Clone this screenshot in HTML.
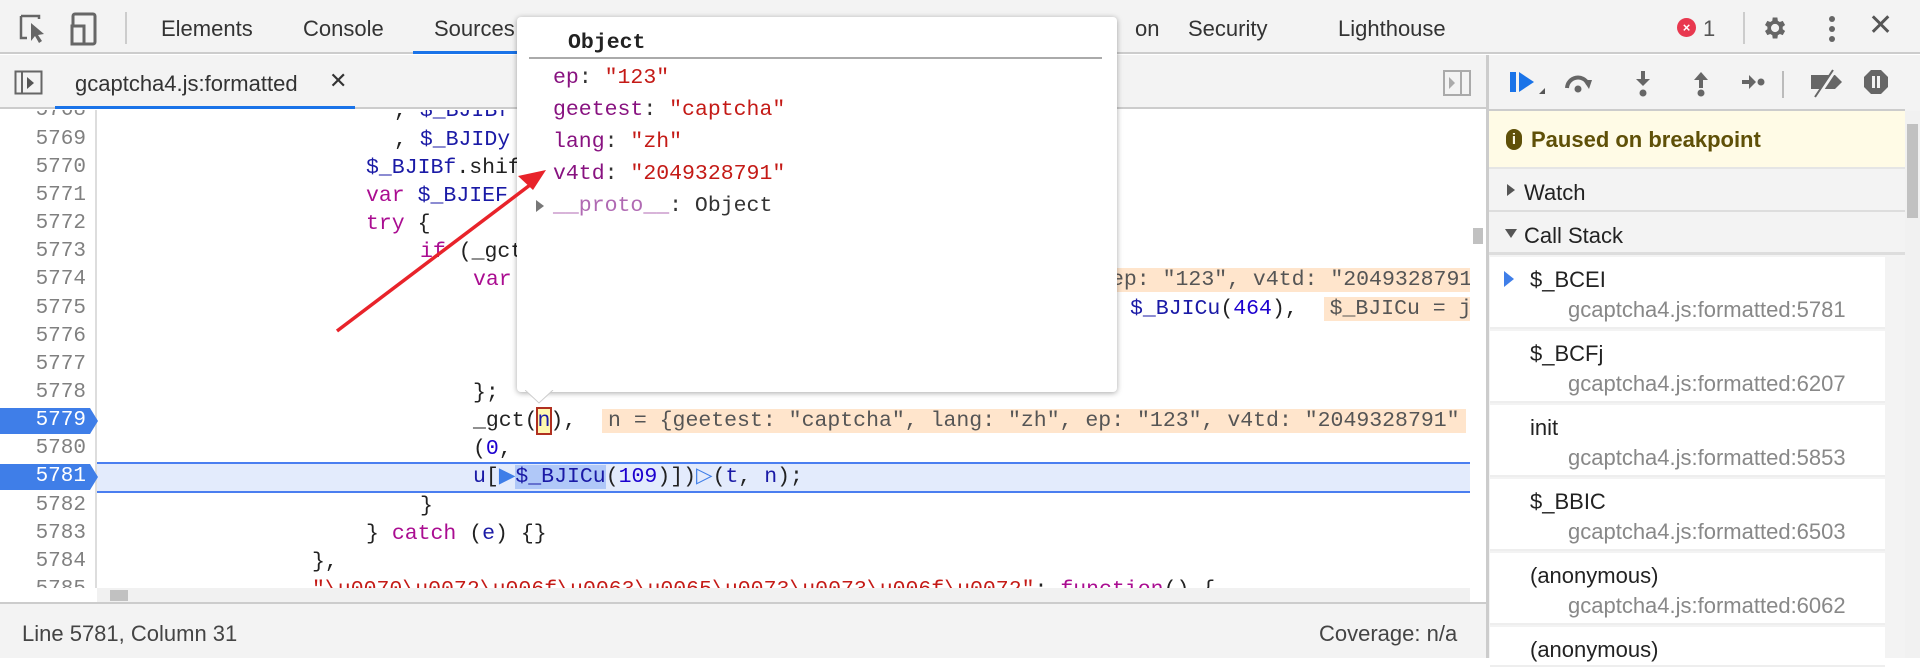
<!DOCTYPE html>
<html><head><meta charset="utf-8"><style>
*{margin:0;padding:0;box-sizing:border-box}
body{width:1920px;height:658px;overflow:hidden;background:#fff;font-family:"Liberation Sans",sans-serif;position:relative;color:#333}
.a{position:absolute}
.ui{font-size:22px;color:#333;white-space:nowrap}
.mono{font-family:"Liberation Mono",monospace;font-size:21.5px;white-space:pre}
.ln{position:absolute;left:0;width:86px;text-align:right;color:#808080;font-family:"Liberation Mono",monospace;font-size:21px;height:28px;line-height:28px}
.cl{position:absolute;height:28px;line-height:28px;font-family:"Liberation Mono",monospace;font-size:21.5px;white-space:pre;color:#222}
.v{color:#1a1aa6}.k{color:#aa0d91}.s{color:#c41a16}.n{color:#1c00cf}
.inl{background:#ffe5cc;color:#555;padding:0 6px}
.cs{position:absolute;left:1490px;width:395px;height:72px;background:#fff;border-bottom:2px solid #eee}
.cs .nm{position:absolute;left:40px;top:10px;font-size:22px;color:#222}
.cs .fl{position:absolute;left:78px;top:40px;font-size:22px;color:#888}
</style></head><body>
<!-- top bar -->
<div class="a" style="left:0;top:0;width:1920px;height:54px;background:#f3f3f3;border-bottom:2px solid #ccc"></div>
<svg class="a" style="left:18px;top:14px" width="40" height="30" viewBox="0 0 40 30"><path d="M3 2h18v3M3 2v22h6" fill="none" stroke="#666" stroke-width="2.5"/><path d="M13 9l0 18 4-5 4 7 3-2-4-6 6-1z" fill="#666"/></svg>
<svg class="a" style="left:70px;top:12px" width="30" height="34"><rect x="3" y="2" width="22" height="30" rx="2" fill="none" stroke="#666" stroke-width="3"/><rect x="2" y="14" width="12" height="18" fill="#f3f3f3" stroke="#666" stroke-width="3"/></svg>
<div class="a" style="left:125px;top:12px;width:2px;height:32px;background:#ccc"></div>
<div class="a ui" style="left:161px;top:16px">Elements</div>
<div class="a ui" style="left:303px;top:16px">Console</div>
<div class="a ui" style="left:434px;top:16px">Sources</div>
<div class="a" style="left:413px;top:51px;width:110px;height:3px;background:#1a73e8"></div>
<div class="a ui" style="left:1135px;top:16px">on</div>
<div class="a ui" style="left:1188px;top:16px">Security</div>
<div class="a ui" style="left:1338px;top:16px">Lighthouse</div>
<div class="a" style="left:1677px;top:18px;width:19px;height:19px;border-radius:50%;background:#e8384f;color:#fff;font-size:13px;text-align:center;line-height:19px;font-weight:bold">×</div>
<div class="a ui" style="left:1703px;top:16px;color:#555">1</div>
<div class="a" style="left:1743px;top:12px;width:2px;height:32px;background:#ccc"></div>
<svg class="a" style="left:1760px;top:14px" width="28" height="28" viewBox="0 0 24 24"><path fill="#666" d="M19.4 13a7.5 7.5 0 000-2l2.1-1.6-2-3.5-2.5 1a7 7 0 00-1.700-1L14.9 3h-4l-.4 2.9a7 7 0 00-1.7 1l-2.5-1-2 3.5L6.4 11a7.5 7.5 0 000 2l-2.1 1.6 2 3.5 2.5-1a7 7 0 001.7 1l.4 2.9h4l.4-2.9a7 7 0 001.7-1l2.5 1 2-3.5zM12.9 15.5a3.5 3.5 0 110-7 3.5 3.5 0 010 7z"/></svg>
<div class="a" style="left:1829px;top:16px;width:6px;height:6px;border-radius:50%;background:#666;box-shadow:0 10px 0 #666,0 20px 0 #666"></div>
<div class="a" style="left:1868px;top:8px;font-size:30px;color:#555">✕</div>

<!-- second toolbar -->
<div class="a" style="left:0;top:55px;width:1488px;height:54px;background:#f3f3f3;border-bottom:2px solid #ccc"></div>
<svg class="a" style="left:14px;top:70px" width="30" height="26"><rect x="1.5" y="1.5" width="26" height="22" fill="none" stroke="#666" stroke-width="2"/><line x1="8" y1="2" x2="8" y2="24" stroke="#666" stroke-width="2"/><path d="M13 7v12l7-6z" fill="#555"/></svg>
<div class="a ui" style="left:75px;top:71px">gcaptcha4.js:formatted</div>
<div class="a ui" style="left:329px;top:68px;font-size:22px">✕</div>
<div class="a" style="left:55px;top:106px;width:300px;height:3px;background:#1a73e8"></div>
<svg class="a" style="left:1443px;top:70px" width="28" height="26"><rect x="1" y="1" width="26" height="24" fill="none" stroke="#aaa" stroke-width="2"/><line x1="18" y1="1" x2="18" y2="25" stroke="#aaa" stroke-width="2"/><path d="M6 7v12l6-6z" fill="#aaa"/></svg>

<!-- code area -->
<div class="a" style="left:0;top:110px;width:1470px;height:478px;overflow:hidden">
 <div class="a" style="left:95px;top:0;width:2px;height:478px;background:#ddd"></div>
 <div class="a" style="left:97px;top:352px;width:1373px;height:31px;background:#e3ebfc;border-top:2px solid #4a7ef0;border-bottom:2px solid #4a7ef0"></div>
 <svg class="a" style="left:0;top:297px" width="100" height="28"><path d="M0 1h90l8 13-8 13H0z" fill="#3f7ee8"/></svg>
 <svg class="a" style="left:0;top:353px" width="100" height="28"><path d="M0 1h90l8 13-8 13H0z" fill="#3f7ee8"/></svg>
 <div class="ln" style="top:-13px">5768</div>
 <div class="ln" style="top:15.5px">5769</div>
 <div class="ln" style="top:43.7px">5770</div>
 <div class="ln" style="top:71.8px">5771</div>
 <div class="ln" style="top:100px">5772</div>
 <div class="ln" style="top:128.1px">5773</div>
 <div class="ln" style="top:156.3px">5774</div>
 <div class="ln" style="top:184.5px">5775</div>
 <div class="ln" style="top:212.6px">5776</div>
 <div class="ln" style="top:240.8px">5777</div>
 <div class="ln" style="top:269px">5778</div>
 <div class="ln" style="top:297.1px;color:#fff">5779</div>
 <div class="ln" style="top:325.3px">5780</div>
 <div class="ln" style="top:353.4px;color:#fff">5781</div>
 <div class="ln" style="top:381.6px">5782</div>
 <div class="ln" style="top:409.8px">5783</div>
 <div class="ln" style="top:437.9px">5784</div>
 <div class="ln" style="top:466px">5785</div>

 <div class="cl" style="left:394px;top:-13px">, <span class="v">$_BJIBf</span></div>
 <div class="cl" style="left:394px;top:15.5px">, <span class="v">$_BJIDy</span></div>
 <div class="cl" style="left:366px;top:43.7px"><span class="v">$_BJIBf</span>.shift</div>
 <div class="cl" style="left:366px;top:71.8px"><span class="k">var</span> <span class="v">$_BJIEF</span></div>
 <div class="cl" style="left:366px;top:100px"><span class="k">try</span> {</div>
 <div class="cl" style="left:420px;top:128.1px"><span class="k">if</span> (_gct</div>
 <div class="cl" style="left:473px;top:156.3px"><span class="k">var</span></div>
 <div class="cl" style="left:1105px;top:156.3px"><span class="inl">ep: "123", v4td: "2049328791</span></div>
 <div class="cl" style="left:1130px;top:184.5px"><span class="v">$_BJICu</span>(<span class="n">464</span>),  <span class="inl">$_BJICu = j</span></div>
 <div class="cl" style="left:473px;top:269px">};</div>
 <div class="cl" style="left:473px;top:297.1px">_gct(<span style="background:#fff7b0;outline:2px solid #b03020;color:#1a1aa6">n</span>),  <span class="inl">n = {geetest: "captcha", lang: "zh", ep: "123", v4td: "2049328791"</span></div>
 <div class="cl" style="left:473px;top:325.3px">(<span class="n">0</span>,</div>
 <div class="cl" style="left:473px;top:353.4px"><span class="v">u</span>[<span style="color:#3f7ee8">▶</span><span style="background:#b0c8f8"><span class="v">$_BJICu</span></span>(<span class="n">109</span>)])<span style="color:#3f7ee8">▷</span>(<span class="v">t</span>, <span class="v">n</span>);</div>
 <div class="cl" style="left:420px;top:381.6px">}</div>
 <div class="cl" style="left:366px;top:409.8px">} <span class="k">catch</span> (<span class="v">e</span>) {}</div>
 <div class="cl" style="left:312px;top:437.9px">},</div>
 <div class="cl" style="left:312px;top:466px"><span class="s">"\u0070\u0072\u006f\u0063\u0065\u0073\u0073\u006f\u0072"</span>: <span class="k">function</span>() {</div>
</div>
<!-- scrollbars -->
<div class="a" style="left:1470px;top:110px;width:14px;height:478px;background:#fff"></div>
<div class="a" style="left:1473px;top:228px;width:10px;height:16px;background:#c1c1c1"></div>
<div class="a" style="left:97px;top:588px;width:1373px;height:14px;background:#f1f1f1"></div>
<div class="a" style="left:110px;top:590px;width:18px;height:11px;background:#c1c1c1"></div>
<div class="a" style="left:1486px;top:55px;width:3px;height:603px;background:#ccc"></div>

<!-- status bar -->
<div class="a" style="left:0;top:602px;width:1486px;height:56px;background:#f3f3f3;border-top:2px solid #ccc"></div>
<div class="a ui" style="left:22px;top:621px;color:#444">Line 5781, Column 31</div>
<div class="a ui" style="left:1319px;top:621px;color:#444">Coverage: n/a</div>

<!-- right panel -->
<div class="a" style="left:1489px;top:55px;width:431px;height:603px;background:#f3f3f3"></div>
<svg class="a" style="left:1505px;top:68px" width="400" height="36">
 <rect x="5" y="4" width="6" height="20" fill="#1a73e8"/><path d="M14 4v20l15-10z" fill="#1a73e8"/><path d="M34 26h6v-6z" fill="#555"/>
 <path d="M62 20a11 11 0 0 1 21-4" fill="none" stroke="#666" stroke-width="4"/><path d="M78 12l9 0-3 9z" fill="#666"/><circle cx="73" cy="21" r="3.5" fill="#666"/>
 <rect x="136" y="3" width="4" height="10" fill="#666"/><path d="M131 11h14l-7 7z" fill="#666"/><circle cx="138" cy="25" r="3.5" fill="#666"/>
 <rect x="194" y="10" width="4" height="10" fill="#666"/><path d="M189 12h14l-7-8z" fill="#666"/><circle cx="196" cy="25" r="3.5" fill="#666"/>
 <rect x="237" y="12" width="8" height="4" fill="#666"/><path d="M244 7l7 7-7 7z" fill="#666"/><circle cx="256" cy="14" r="3.5" fill="#666"/>
 <rect x="277" y="3" width="2" height="27" fill="#bbb"/>
 <path d="M306 7h24l7 7-7 7h-24z" fill="#666"/><path d="M330 2l-18 27" stroke="#f3f3f3" stroke-width="4"/><path d="M328 2l-18 27" stroke="#666" stroke-width="2"/>
 <path d="M366 2h10l7 7v10l-7 7h-10l-7-7v-10z" fill="#666"/><rect x="367" y="8" width="3" height="12" fill="#f3f3f3"/><rect x="372" y="8" width="3" height="12" fill="#f3f3f3"/>
</svg>
<div class="a" style="left:1489px;top:109px;width:416px;height:2px;background:#ccc"></div>
<div class="a" style="left:1489px;top:111px;width:416px;height:58px;background:#fffbe6;border-bottom:2px solid #e5e5e5"></div>
<div class="a" style="left:1506px;top:129px;width:16px;height:21px;border-radius:8px;background:#5f5008;color:#fffbe6;font-size:15px;font-weight:bold;text-align:center;line-height:21px">i</div>
<div class="a ui" style="left:1531px;top:127px;font-weight:bold;color:#5f5008">Paused on breakpoint</div>
<div class="a" style="left:1489px;top:169px;width:416px;height:43px;border-bottom:2px solid #ddd"></div>
<div class="a" style="left:1507px;top:184px;width:0;height:0;border-left:8px solid #555;border-top:6px solid transparent;border-bottom:6px solid transparent"></div>
<div class="a ui" style="left:1524px;top:180px;color:#222">Watch</div>
<div class="a" style="left:1489px;top:212px;width:416px;height:43px;border-bottom:3px solid #ddd"></div>
<div class="a" style="left:1505px;top:229px;width:0;height:0;border-top:9px solid #555;border-left:6px solid transparent;border-right:6px solid transparent"></div>
<div class="a ui" style="left:1524px;top:223px;color:#222">Call Stack</div>
<div class="cs" style="top:257px"><div class="a" style="left:14px;top:14px;width:0;height:0;border-left:10px solid #3f7ee8;border-top:8px solid transparent;border-bottom:8px solid transparent"></div><div class="nm">$_BCEI</div><div class="fl">gcaptcha4.js:formatted:5781</div></div>
<div class="cs" style="top:331px"><div class="nm">$_BCFj</div><div class="fl">gcaptcha4.js:formatted:6207</div></div>
<div class="cs" style="top:405px"><div class="nm">init</div><div class="fl">gcaptcha4.js:formatted:5853</div></div>
<div class="cs" style="top:479px"><div class="nm">$_BBIC</div><div class="fl">gcaptcha4.js:formatted:6503</div></div>
<div class="cs" style="top:553px"><div class="nm">(anonymous)</div><div class="fl">gcaptcha4.js:formatted:6062</div></div>
<div class="cs" style="top:627px;height:40px"><div class="nm">(anonymous)</div></div>
<div class="a" style="left:1905px;top:111px;width:15px;height:547px;background:#f1f1f1"></div>
<div class="a" style="left:1907px;top:124px;width:11px;height:94px;background:#c1c1c1"></div>

<!-- popup -->
<div class="a" style="left:517px;top:17px;width:600px;height:375px;background:#fff;border-radius:4px;box-shadow:0 1px 6px rgba(0,0,0,.35)"></div>
<svg class="a" style="left:525px;top:390px" width="30" height="14"><path d="M0 0l14 13 14-13z" fill="#fff"/><path d="M0 0l14 13 14-13" fill="none" stroke="#ccc"/></svg>
<div class="a mono" style="left:568px;top:31px;font-weight:bold;color:#222">Object</div>
<div class="a" style="left:529px;top:57px;width:573px;height:2px;background:#aaa"></div>
<div class="a mono" style="left:553px;top:66px"><span style="color:#881280">ep</span>: <span class="s">"123"</span></div>
<div class="a mono" style="left:553px;top:98px"><span style="color:#881280">geetest</span>: <span class="s">"captcha"</span></div>
<div class="a mono" style="left:553px;top:130px"><span style="color:#881280">lang</span>: <span class="s">"zh"</span></div>
<div class="a mono" style="left:553px;top:162px"><span style="color:#881280">v4td</span>: <span class="s">"2049328791"</span></div>
<div class="a" style="left:536px;top:200px;width:0;height:0;border-left:8px solid #777;border-top:6px solid transparent;border-bottom:6px solid transparent"></div>
<div class="a mono" style="left:553px;top:194px"><span style="color:#b06ab3">__proto__</span>: Object</div>

<!-- red arrow -->
<svg class="a" style="left:0;top:0" width="1920" height="658"><line x1="337" y1="331" x2="530" y2="185" stroke="#e8232a" stroke-width="3.5"/><path d="M546 170l-28 6 15 14z" fill="#e8232a"/></svg>
</body></html>
